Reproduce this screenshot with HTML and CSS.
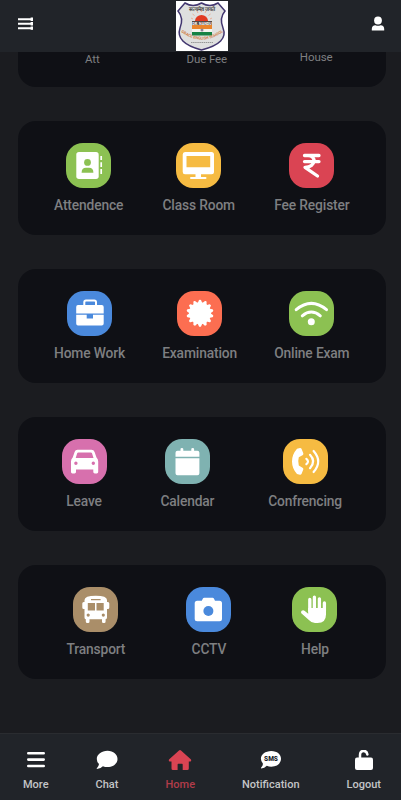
FILE: index.html
```
<!DOCTYPE html>
<html lang="en">

<head>
  <meta charset="utf-8">
  <meta name="viewport" content="width=device-width, initial-scale=1">
  <title>School</title>
  <link rel="stylesheet" href="styles.css">
</head>

<body>
  <header class="header">
    <svg class="menu" width="16" height="14" viewBox="0 0 16 14">
      <path d="M0 2.200H15M0 6.800H15M0 11.300H15" fill="none" stroke="#fff" stroke-width="2" />
      <path d="M13.800 .6V12.900" stroke="#fff" stroke-width="2.400" stroke-dasharray="3.400 1" />
    </svg>
    <svg class="logo" width="52" height="50" viewBox="0 0 52 50">
      <rect width="52" height="50" fill="#fff" />
      <path d="M9 2Q17 7 25.500 2Q34 7 42 2L49 10Q43 17 47 27Q53 42 25.500 49Q-1 42 4 27Q8 17 2 10Z" fill="#dfe0df" stroke="#42366f" stroke-width="1.500" />
      <path d="M19 20A6.500 6 0 0 1 32 20Z" fill="#e13a22" />
      <path d="M17 18L15 17M18.500 14.500L16.500 13M22 12L21 10M25.500 11V9M29 12L30 10M32.500 14.500L34.500 13M34 18L36 17" stroke="#e99a78" stroke-width=".7" />
      <rect x="16" y="20" width="20" height="4" fill="#574946" />
      <rect x="16" y="24" width="20" height="4" fill="#e9852d" />
      <rect x="16" y="28" width="20" height="3" fill="#f4f4ef" />
      <rect x="16" y="31" width="20" height="3.500" fill="#168244" />
      <circle cx="26" cy="29" r="1.500" fill="#8a8297" />
      <text x="26" y="9.500" class="logo-top">सत्यमेव जयते</text>
      <text x="26" y="23.500" class="logo-name">DR. NANDU</text>
      <path id="arc" d="M5 31Q26 46 47 31" fill="none" />
      <text class="logo-school"><textPath href="#arc">GRACE ENGLISH SCHOOL</textPath></text>
      <path d="M15 41.500H37" stroke="#777" stroke-width=".7" stroke-dasharray="1.500 .6" />
    </svg>
    <svg class="user" width="14" height="16" viewBox="0 0 14 16">
      <circle cx="7" cy="4.500" r="3.900" fill="#fff" />
      <path d="M.8 14.600V13Q.8 9.200 4.500 9.200Q7 10.400 9.500 9.200Q13.200 9.200 13.200 13V14.600Z" fill="#fff" />
    </svg>
  </header>

  <main class="content">
    <section class="card card-summary">
      <span>Att</span>
      <span class="due">Due Fee</span>
      <span class="house">House</span>
    </section>

    <section class="card">
      <a class="item">
        <svg class="icon green" viewBox="0 0 45 45">
          <rect x="10.300" y="9" width="22.400" height="27" rx="2.700" fill="#fff" />
          <path d="M35.200 13V17M35.200 19.200V24M35.200 26V31" stroke="#fff" stroke-width="1.700" />
          <circle cx="21.500" cy="19.400" r="3.400" fill="#8cc152" />
          <path d="M15.600 29.700Q15.600 24.700 20 24.700H23Q27.400 24.700 27.400 29.700Z" fill="#8cc152" />
        </svg>
        <span>Attendence</span>
      </a>
      <a class="item">
        <svg class="icon yellow" viewBox="0 0 45 45">
          <path fill-rule="evenodd" d="M9 9H35.500Q38 9 38 11.500V28.800Q38 31.300 35.500 31.300H25V34H29.500A1 1 0 0 1 29.500 36H15A1 1 0 0 1 15 34H19.500V31.300H9Q6.700 31.300 6.700 28.800V11.500Q6.700 9 9 9ZM10.500 13V24.200H34.200V13Z" fill="#fff" />
        </svg>
        <span>Class Room</span>
      </a>
      <a class="item">
        <svg class="icon red" viewBox="0 0 45 45">
          <path d="M15.500 12.500H30M15.500 18.600H30M19 12.500C27.500 12.500 27.500 24 16 24.300L28.500 33" fill="none" stroke="#fff" stroke-width="3.300" stroke-linecap="round" stroke-linejoin="round" />
        </svg>
        <span>Fee Register</span>
      </a>
    </section>

    <section class="card">
      <a class="item">
        <svg class="icon blue" viewBox="0 0 45 45">
          <path d="M17.300 14.500V11.300Q17.300 9.600 19 9.600H27.300Q29 9.600 29 11.300V14.500" fill="none" stroke="#fff" stroke-width="2" />
          <path d="M11 14H34.700Q36.700 14 36.700 16V22.500H9.200V16Q9.200 14 11 14ZM9.200 23.800H19.700V27.500H26V23.800H36.700V32.500Q36.700 34.400 34.700 34.400H11Q9.200 34.400 9.200 32.500Z" fill="#fff" />
        </svg>
        <span>Home Work</span>
      </a>
      <a class="item">
        <svg class="icon coral" viewBox="0 0 45 45">
          <circle cx="23" cy="22.300" r="11" fill="#fff" />
          <g fill="#fff" stroke="#fff" stroke-width="1.800" stroke-linejoin="round">
            <path id="ray" d="M21.700 12L22.700 9.700H23.300L24.300 12V32.600L23.300 34.900H22.700L21.700 32.600Z" />
            <use href="#ray" transform="rotate(25.714 23 22.300)" />
            <use href="#ray" transform="rotate(51.429 23 22.300)" />
            <use href="#ray" transform="rotate(77.143 23 22.300)" />
            <use href="#ray" transform="rotate(102.857 23 22.300)" />
            <use href="#ray" transform="rotate(128.571 23 22.300)" />
            <use href="#ray" transform="rotate(154.286 23 22.300)" />
          </g>
        </svg>
        <span>Examination</span>
      </a>
      <a class="item">
        <svg class="icon green" viewBox="0 0 45 45">
          <path d="M7.200 18.700Q22.300 6 37.500 18.700M13.300 24.800Q22.300 17.300 31.300 24.800" fill="none" stroke="#fff" stroke-width="3" stroke-linecap="round" />
          <circle cx="22.300" cy="30.800" r="3.500" fill="#fff" />
        </svg>
        <span>Online Exam</span>
      </a>
    </section>

    <section class="card card-leave">
      <a class="item">
        <svg class="icon pink" viewBox="0 0 45 45">
          <path fill-rule="evenodd" d="M15.500 10.700H29.500Q31.800 10.700 32.600 13L34.500 18.500Q36.200 20 36.200 22.500V33Q36.200 34.400 34.800 34.400H32.800Q31.300 34.400 31.300 33V30.500H14V33Q14 34.400 12.500 34.400H10.400Q9 34.400 9 33V22.500Q9 20 10.700 18.500L12.600 13Q13.300 10.700 15.500 10.700ZM16.300 13.500Q15.500 13.500 15.200 14.300L13.700 19H31.500L30 14.300Q29.700 13.500 28.900 13.500ZM13.900 22.500A1.700 1.700 0 1 0 13.900 25.900A1.700 1.700 0 1 0 13.900 22.500ZM31.300 22.500A1.700 1.700 0 1 0 31.300 25.900A1.700 1.700 0 1 0 31.300 22.500Z" fill="#fff" />
        </svg>
        <span>Leave</span>
      </a>
      <a class="item">
        <svg class="icon teal" viewBox="0 0 45 45">
          <path d="M10.500 17.700V13.700Q10.500 11.700 12.500 11.700H15.500V10Q15.500 8.900 16.900 8.900T18.300 10V11.700H26.300V10Q26.300 8.900 27.700 8.900T29.100 10V11.700H32.400Q34.400 11.700 34.400 13.700V17.700ZM10.500 19.300H34.400V34.300Q34.400 36.300 32.400 36.300H12.500Q10.500 36.300 10.500 34.300Z" fill="#fff" />
        </svg>
        <span>Calendar</span>
      </a>
      <a class="item">
        <svg class="icon yellow" viewBox="0 0 45 45">
          <path d="M14 9.800L17 9Q18 8.900 18.500 9.800L20.300 14.200Q20.500 15.200 19.900 15.900L15.800 18.300Q14.600 22.500 15.800 26.500L19.900 29Q20.500 29.600 20.300 30.600L18.500 35Q18 36 17 35.800L14 35Q9 29.500 9 22.500T14 9.800Z" fill="#fff" />
          <path d="M23.400 19.800Q26.600 22.500 23.400 25.200M27 15.800Q33.400 22.500 27 29.200M30.600 12Q39.800 22.500 30.600 33" fill="none" stroke="#fff" stroke-width="2.200" stroke-linecap="round" />
        </svg>
        <span>Confrencing</span>
      </a>
    </section>

    <section class="card card-transport">
      <a class="item">
        <svg class="icon brown" viewBox="0 0 45 45">
          <path fill-rule="evenodd" d="M22.800 8.700Q34 8.700 34 13V15H35Q36.300 15 36.300 16.500V20.500Q36.300 22 35 22H34V30.500Q34 32 32.600 32.300V34.500Q32.600 36 31.200 36H30.300Q29 36 29 34.500V32.300H16.500V34.500Q16.500 36 15.200 36H14.300Q12.800 36 12.800 34.500V32.300Q11.500 32 11.500 30.500V22H10.700Q9.300 22 9.300 20.500V16.500Q9.300 15 10.700 15H11.500V13Q11.500 8.700 22.800 8.700ZM18 12V13.300H27.600V12ZM14.800 16V23.600H22V16ZM23.500 16V23.600H30.700V16ZM15.200 26.500A1.600 1.600 0 1 0 15.200 29.700A1.600 1.600 0 1 0 15.200 26.500ZM30.300 26.500A1.600 1.600 0 1 0 30.300 29.700A1.600 1.600 0 1 0 30.300 26.500Z" fill="#fff" />
        </svg>
        <span>Transport</span>
      </a>
      <a class="item">
        <svg class="icon blue" viewBox="0 0 45 45">
          <path d="M11.200 13.700H15.800L16.900 11.500Q17.300 10.700 18.200 10.700H26.600Q27.500 10.700 27.900 11.500L29 13.700H33.500Q36 13.700 36 16.200V31.800Q36 34.300 33.500 34.300H11.200Q8.700 34.300 8.700 31.800V16.200Q8.700 13.700 11.200 13.700Z" fill="#fff" />
          <circle cx="22.400" cy="24" r="5" fill="#4a89dc" />
        </svg>
        <span>CCTV</span>
      </a>
      <a class="item">
        <svg class="icon green" viewBox="0 0 45 45">
          <path d="M17.800 24V12.400M22.400 22V10.200M27.400 22V11.800M32.400 24V16" fill="none" stroke="#fff" stroke-width="3.300" stroke-linecap="round" />
          <path d="M16.200 21H34V27.500Q34 36 25.500 36H23Q19.500 36 17.200 33.200L9.300 26.300Q8.500 24.800 9.700 23.700Q11.300 22.600 12.800 24L16.200 26.800Z" fill="#fff" />
        </svg>
        <span>Help</span>
      </a>
    </section>
  </main>

  <nav class="tabbar">
    <a class="tab">
      <svg width="22" height="22" viewBox="0 0 22 22">
        <path d="M3.300 3.300H18.700M3.300 9.600H18.700M3.300 16H18.700" stroke="currentColor" stroke-width="2.600" stroke-linecap="round" />
      </svg>
      <span>More</span>
    </a>
    <a class="tab">
      <svg width="22" height="22" viewBox="0 0 22 22">
        <path d="M11.500 .7C17.500 .7 21.500 4.500 21.500 8.900S17.500 17.100 11.500 17.100Q9 17.100 6.900 16.200Q4.500 18.900 .9 18.900Q.5 18.500 1 18Q2.800 16 3 14.100Q.8 11.800 .8 8.900C.8 4.500 5.500 .7 11.500 .7Z" fill="currentColor" />
      </svg>
      <span>Chat</span>
    </a>
    <a class="tab active">
      <svg width="24" height="22" viewBox="0 0 24 22">
        <path d="M11 .4Q12 -.4 13 .4L23 9.600Q23.600 11 22.300 11.400H20.800V18.500Q20.800 20 19.300 20H14.700V14.500Q14.700 13.700 14 13.700H10.300Q9.600 13.700 9.600 14.500V20H5Q3.500 20 3.500 18.500V11.400H1.700Q.4 11 1 9.600Z" fill="currentColor" />
      </svg>
      <span>Home</span>
    </a>
    <a class="tab">
      <svg width="22" height="22" viewBox="0 0 22 22">
        <path d="M11.300 .9C17.300 .9 21 4.500 21 8.800S17.300 16.700 11.300 16.700Q8.800 16.700 6.800 15.800Q4.500 18.400 1.200 18.400Q.8 18 1.200 17.500Q2.900 15.600 3 13.700Q.9 11.500 .9 8.800C.9 4.500 5.300 .9 11.300 .9Z" fill="currentColor" />
        <text x="11" y="11.300" class="sms">SMS</text>
      </svg>
      <span>Notification</span>
    </a>
    <a class="tab">
      <svg width="22" height="22" viewBox="0 0 22 22">
        <path d="M7 9V5Q7 .9 10.700 .9Q13.900 .9 14.400 4.500" fill="none" stroke="currentColor" stroke-width="2.500" stroke-linecap="round" />
        <rect x="2" y="7.500" width="18" height="12.500" rx="2" fill="currentColor" />
      </svg>
      <span>Logout</span>
    </a>
  </nav>
</body>

</html>
```

FILE: styles.css
```
* {
  box-sizing: border-box;
}

body {
  margin: 0;
  height: 800px;
  display: flex;
  flex-direction: column;
  overflow: hidden;
  background: #1b1c20;
  color: #7e7f81;
  font-family: Roboto, "Liberation Sans", sans-serif;
}

svg {
  display: block;
}

.header {
  height: 52px;
  flex: none;
  display: grid;
  grid-template-columns: 1fr 52px 1fr;
  align-items: center;
  padding: 0 16px 0 18px;
  background: #212429;
}

.menu {
  margin-bottom: 5px;
}

.user {
  justify-self: end;
  margin-bottom: 5px;
}

.logo text {
  text-anchor: middle;
  font-weight: bold;
}

.logo .logo-top {
  font-size: 5.600px;
  fill: #444;
}

.logo .logo-name {
  font-size: 3.700px;
  fill: #fff;
}

.logo .logo-school {
  font-size: 3.900px;
  fill: #cf7b43;
  text-anchor: start;
}

.content {
  flex: 1;
  padding: 0 15.500px 0 18px;
}

.card {
  height: 114px;
  margin-bottom: 34px;
  padding: 22px 36px 0;
  display: flex;
  justify-content: space-between;
  align-items: flex-start;
  border-radius: 18px;
  background: #0f1015;
}

.card-summary {
  height: 35px;
  padding: 0 53px 0 67px;
  border-radius: 0 0 18px 18px;
  font-size: 11.500px;
  letter-spacing: -.1px;
  line-height: 14px;
}

.card-summary .due {
  margin-left: 14px;
}

.card-summary .house {
  margin-top: -2px;
}

.card-leave {
  padding: 22px 43.500px 0;
}

.card-transport {
  padding: 22px 48px 0 48.500px;
}

.item {
  display: flex;
  flex-direction: column;
  align-items: center;
  gap: 8px;
  font-size: 13.800px;
  font-weight: 500;
  letter-spacing: -.15px;
  line-height: 18px;
  white-space: nowrap;
}

.icon {
  width: 45px;
  height: 45px;
  border-radius: 17px;
}

.green { background: #8cc152; }
.yellow { background: #f6bb42; }
.red { background: #da4453; }
.blue { background: #4a89dc; }
.coral { background: #fc6e51; }
.pink { background: #d770ad; }
.teal { background: #7fb2b1; }
.brown { background: #aa8e69; }

.tabbar {
  height: 67px;
  flex: none;
  padding: 16px 20px 0 23px;
  display: flex;
  justify-content: space-between;
  border-top: 1px solid #2a2c30;
  background: #212429;
}

.tab {
  display: flex;
  flex-direction: column;
  align-items: center;
  gap: 5px;
  color: #fff;
  font-size: 11px;
  font-weight: 500;
  line-height: 16px;
}

.tab span {
  color: #c4c5c7;
}

.tab.active {
  color: #da4453;
}

.tab.active span {
  color: #b23c4a;
}

.sms {
  font-size: 6.500px;
  font-weight: 900;
  text-anchor: middle;
  fill: #212429;
}
```
